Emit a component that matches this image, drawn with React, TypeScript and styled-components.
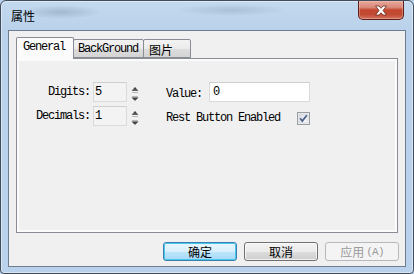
import React from 'react';
import styled, { createGlobalStyle } from 'styled-components';

const Global = createGlobalStyle`
  html, body { margin: 0; padding: 0; background: #b9d1ea; }
  body { width: 414px; height: 274px; overflow: hidden; }
  * { box-sizing: border-box; }
`;

const mono = `"Liberation Mono", "Noto Sans CJK SC", monospace`;
const cjk = `"Noto Sans CJK SC", "Liberation Sans", sans-serif`;

const Window = styled.div`
  width: 414px;
  height: 274px;
  border: 1px solid #414d5a;
  border-radius: 6px 6px 4px 4px;
  background:
    radial-gradient(ellipse 40px 7px at 60px 11px, rgba(110, 130, 150, 0.35), transparent),
    radial-gradient(ellipse 55px 6px at 230px 9px, rgba(120, 140, 160, 0.3), transparent),
    linear-gradient(180deg, #c3d9ef 0px, #b9d1ea 30px, #b9d1ea 100%);
  box-shadow: inset 0 0 0 1px rgba(255, 255, 255, 0.45);
  display: flex;
  flex-direction: column;
  overflow: hidden;
`;

const TitleBar = styled.div`
  height: 29px;
  display: flex;
  justify-content: space-between;
  align-items: flex-start;
  padding: 0 8px 0 10px;
`;

const Title = styled.div`
  margin-top: 7px;
  font-family: ${cjk};
  font-size: 12px;
  line-height: 16px;
  color: #000;
`;

const CloseButton = styled.div`
  width: 46px;
  height: 19px;
  margin-right: 1px;
  border: 1px solid #5b2018;
  border-top: none;
  border-radius: 0 0 5px 5px;
  background: linear-gradient(180deg, #e6a89b 0%, #d98a7b 35%, #c4472f 50%, #c24a33 75%, #d27461 100%);
  box-shadow: inset 0 0 0 1px rgba(255, 210, 200, 0.35);
  display: flex;
  align-items: center;
  justify-content: center;
`;

const Client = styled.div`
  flex: 1;
  margin: 0 7px 6px 7px;
  border: 1px solid #6f7e8f;
  background: #f0f0f0;
  display: flex;
  flex-direction: column;
  padding: 6px 7px 5px 7px;
`;

const TabStrip = styled.div`
  height: 21px;
  display: flex;
  align-items: flex-end;
  position: relative;
  z-index: 1;
`;

const Tab = styled.div<{ $active?: boolean; $w: number; $pl: number; $cjk?: boolean }>`
  width: ${(p) => p.$w}px;
  height: ${(p) => (p.$active ? 22 : 19)}px;
  margin-bottom: ${(p) => (p.$active ? -1 : 0)}px;
  margin-left: ${(p) => (p.$active ? 0 : -1)}px;
  padding-left: ${(p) => p.$pl}px;
  padding-top: ${(p) => (p.$active ? 3 : 3)}px;
  border: 1px solid #898c95;
  border-bottom: ${(p) => (p.$active ? 'none' : '1px solid #898c95')};
  border-radius: 2px 2px 0 0;
  background: ${(p) =>
    p.$active ? '#fbfbfb' : 'linear-gradient(180deg, #f3f3f3 0%, #ebebeb 50%, #dddddd 51%, #d4d4d4 100%)'};
  font-family: ${(p) => (p.$cjk ? cjk : mono)};
  font-size: 12px;
  letter-spacing: ${(p) => (p.$cjk ? 0 : -1.2)}px;
  line-height: 13px;
  color: #000;
  white-space: nowrap;
  &:first-child { margin-left: 0; }
`;

const Panel = styled.div`
  height: 175px;
  border: 1px solid #898c95;
  background: #f0f0f0;
  box-shadow: inset 0 0 0 2px #fbfbfb;
  padding: 23px 0 0 19px;
  display: flex;
  align-items: flex-start;
`;

const LeftGrid = styled.div`
  display: grid;
  grid-template-columns: 54px 34px 9px;
  grid-auto-rows: 20px;
  column-gap: 3px;
  row-gap: 4px;
  align-items: center;
`;

const Label = styled.div<{ $pt?: number }>`
  font-family: ${mono};
  font-size: 12px;
  letter-spacing: -1.2px;
  line-height: 13px;
  color: #000;
  text-align: right;
  white-space: nowrap;
  padding-top: ${(p) => p.$pt ?? 0}px;
`;

const NumBox = styled.div<{ $white?: boolean; $w: number }>`
  width: ${(p) => p.$w}px;
  height: 20px;
  border: 1px solid #dadada;
  border-top-color: #cfcfcf;
  background: ${(p) => (p.$white ? '#ffffff' : '#f3f3f3')};
  font-family: ${mono};
  font-size: 12px;
  line-height: 18px;
  padding-left: ${(p) => (p.$white ? 3 : 1)}px;
  color: #000;
`;

const RightCol = styled.div`
  margin-left: 27px;
  display: flex;
  flex-direction: column;
  gap: 4px;
`;

const Row = styled.div<{ $pt?: number }>`
  height: 20px;
  display: flex;
  align-items: center;
  padding-top: ${(p) => p.$pt ?? 0}px;
`;

const ValueLabel = styled(Label)`
  width: 43px;
  text-align: left;
`;

const Check = styled.div`
  margin-left: 17px;
  width: 13px;
  height: 13px;
  display: flex;
`;

const Footer = styled.div`
  margin-top: 9px;
  margin-right: -1px;
  display: flex;
  justify-content: flex-end;
  gap: 7px;
`;

const Button = styled.div<{ $kind?: 'default' | 'normal' | 'disabled' }>`
  width: 74px;
  height: 19px;
  border-radius: 3px;
  border: 1px solid
    ${(p) => (p.$kind === 'default' ? '#3c7fb1' : p.$kind === 'disabled' ? '#b5b9bc' : '#707070')};
  background: ${(p) =>
    p.$kind === 'disabled'
      ? '#f4f4f4'
      : p.$kind === 'default'
      ? 'linear-gradient(180deg, #eaf6fd 0%, #d9f0fc 50%, #bee6fd 51%, #a7d9f5 100%)'
      : 'linear-gradient(180deg, #f2f2f2 0%, #ebebeb 50%, #dddddd 51%, #cfcfcf 100%)'};
  box-shadow: ${(p) =>
    p.$kind === 'default'
      ? 'inset 0 0 0 1px #48c7ea'
      : p.$kind === 'disabled'
      ? 'none'
      : 'inset 0 0 0 1px rgba(255,255,255,0.7)'};
  display: flex;
  align-items: center;
  justify-content: center;
  font-family: ${cjk};
  font-size: 12px;
  line-height: 14px;
  color: ${(p) => (p.$kind === 'disabled' ? '#9a9a9a' : '#000')};
`;

const Small = styled.span`
  font-family: ${mono};
  font-size: 11px;
  letter-spacing: -0.8px;
  margin-left: 2px;
`;

const Spinner = () => (
  <svg width="9" height="20" viewBox="0 0 9 20">
    <defs>
      <linearGradient id="sp" x1="0" y1="0" x2="0" y2="1">
        <stop offset="0" stopColor="#2a2a2a" />
        <stop offset="1" stopColor="#6a6a6a" />
      </linearGradient>
    </defs>
    <polygon points="1.5,9 5,5 8.5,9" fill="url(#sp)" />
    <line x1="2" y1="10.5" x2="8" y2="10.5" stroke="#b8b8b8" strokeWidth="1" />
    <line x1="2" y1="14.5" x2="8" y2="14.5" stroke="#b8b8b8" strokeWidth="1" />
    <polygon points="1.5,15.5 8.5,15.5 5,19" fill="url(#sp)" />
  </svg>
);

const CloseGlyph = () => (
  <svg width="14" height="11" viewBox="0 0 14 11">
    <path
      d="M1.5 1 H5 L7 3.3 L9 1 H12.5 L9 5.5 L12.5 10 H9 L7 7.7 L5 10 H1.5 L5 5.5 Z"
      fill="#ffffff"
      stroke="#6a2a20"
      strokeWidth="0.8"
      strokeLinejoin="round"
    />
  </svg>
);

const CheckGlyph = () => (
  <svg width="13" height="13" viewBox="0 0 13 13">
    <defs>
      <linearGradient id="cb" x1="0" y1="0" x2="1" y2="1">
        <stop offset="0" stopColor="#d8dde3" />
        <stop offset="1" stopColor="#f7f8f9" />
      </linearGradient>
    </defs>
    <rect x="0.5" y="0.5" width="12" height="12" fill="#f4f4f4" stroke="#9a9ea3" />
    <rect x="2" y="2" width="9" height="9" fill="url(#cb)" stroke="#c4c9cf" strokeWidth="0.6" />
    <path d="M3.2 6.3 L5.3 9 L9.8 3.2" fill="none" stroke="#4d5f88" strokeWidth="1.7" />
  </svg>
);

export default function App() {
  return (
    <>
      <Global />
      <Window>
        <TitleBar>
          <Title>属性</Title>
          <CloseButton>
            <CloseGlyph />
          </CloseButton>
        </TitleBar>
        <Client>
          <TabStrip>
            <Tab $active $w={58} $pl={6}>General</Tab>
            <Tab $w={71} $pl={4}>BackGround</Tab>
            <Tab $w={48} $pl={5} $cjk>图片</Tab>
          </TabStrip>
          <Panel>
            <LeftGrid>
              <Label>Digits:</Label>
              <NumBox $w={34}>5</NumBox>
              <Spinner />
              <Label>Decimals:</Label>
              <NumBox $w={34}>1</NumBox>
              <Spinner />
            </LeftGrid>
            <RightCol>
              <Row>
                <ValueLabel $pt={4}>Value:</ValueLabel>
                <NumBox $w={101} $white>0</NumBox>
              </Row>
              <Row $pt={4}>
                <Label>Rest Button Enabled</Label>
                <Check>
                  <CheckGlyph />
                </Check>
              </Row>
            </RightCol>
          </Panel>
          <Footer>
            <Button $kind="default">确定</Button>
            <Button>取消</Button>
            <Button $kind="disabled">
              应用<Small>(A)</Small>
            </Button>
          </Footer>
        </Client>
      </Window>
    </>
  );
}
